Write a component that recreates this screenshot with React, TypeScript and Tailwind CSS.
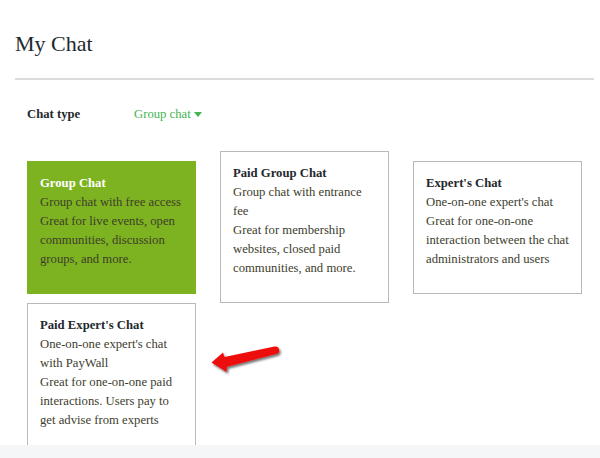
const serif = { fontFamily: '"Liberation Serif", "Times New Roman", serif' };

interface ChatType {
  title: string;
  lines: string[];
  active?: boolean;
}

const TYPES: ChatType[] = [
  {
    title: "Group Chat",
    lines: ["Group chat with free access", "Great for live events, open communities, discussion groups, and more."],
    active: true,
  },
  {
    title: "Paid Group Chat",
    lines: ["Group chat with entrance fee", "Great for membership websites, closed paid communities, and more."],
  },
  {
    title: "Expert's Chat",
    lines: ["One-on-one expert's chat", "Great for one-on-one interaction between the chat administrators and users"],
  },
  {
    title: "Paid Expert's Chat",
    lines: ["One-on-one expert's chat with PayWall", "Great for one-on-one paid interactions. Users pay to get advise from experts"],
  },
];

function TypeCard({ type }: { type: ChatType }) {
  return (
    <div
      className={
        type.active
          ? "border border-[#7db320] bg-[#7db320] pt-[12px] pb-[24px] pl-[12px] pr-[9px]"
          : "border border-[#b9b9b9] bg-white pt-[12px] pb-[24px] pl-[12px] pr-[9px]"
      }
    >
      <div
        className={
          type.active
            ? "text-[12.7px] font-bold leading-[19px] text-white"
            : "text-[12.7px] font-bold leading-[19px] text-[#23282d]"
        }
      >
        {type.title}
      </div>
      {type.lines.map((l) => (
        <p key={l} className="text-[12.7px] leading-[19px] text-[#3d3d2c]">
          {l}
        </p>
      ))}
    </div>
  );
}

// red annotation arrow pointing at the last card
function Arrow() {
  return (
    <svg
      className="absolute left-[205px] top-[340px]"
      width="80"
      height="40"
      viewBox="0 0 80 40"
    >
      <defs>
        <filter id="arrow-shadow" x="-20%" y="-40%" width="140%" height="180%">
          <feDropShadow dx="1.5" dy="2" stdDeviation="1.3" floodColor="#000" floodOpacity="0.55" />
        </filter>
      </defs>
      <path
        d="M6.5 22.5 L18 12.5 L19.5 17 L69.5 6.6 A3.7 3.7 0 0 1 71.3 13.9 L22 26.8 L21.5 32 Z"
        fill="#ee1010"
        filter="url(#arrow-shadow)"
      />
    </svg>
  );
}

export default function App() {
  return (
    <div className="flex h-[458px] flex-col overflow-hidden bg-white" style={serif}>
      <div className="relative min-h-0 flex-1 overflow-hidden pl-[15px] pr-[6px]">
        <h1 className="pt-[31px] text-[22px] font-normal leading-[26px] text-[#23282d]">My Chat</h1>
        <div className="mt-[21px] h-[2px] bg-[#dcdcdc]" />

        <div className="mt-[25px] flex items-center pl-[12px] leading-[19px]">
          <span className="w-[107px] text-[12.7px] font-bold text-[#23282d]">Chat type</span>
          <span className="flex items-center text-[12.7px] text-[#46b450]">
            Group chat
            <svg className="ml-[3px]" width="8" height="5" viewBox="0 0 8 5">
              <path d="M0 0 H8 L4 5 Z" fill="#46b450" />
            </svg>
          </span>
        </div>

        <div className="mt-[27px] grid grid-cols-[169px_169px_169px] items-center gap-x-[24px] pl-[12px]">
          {TYPES.map((t) => (
            <TypeCard key={t.title} type={t} />
          ))}
        </div>

        <Arrow />
      </div>
      <div className="h-[13px] shrink-0 bg-[#f5f6f7]" />
    </div>
  );
}
